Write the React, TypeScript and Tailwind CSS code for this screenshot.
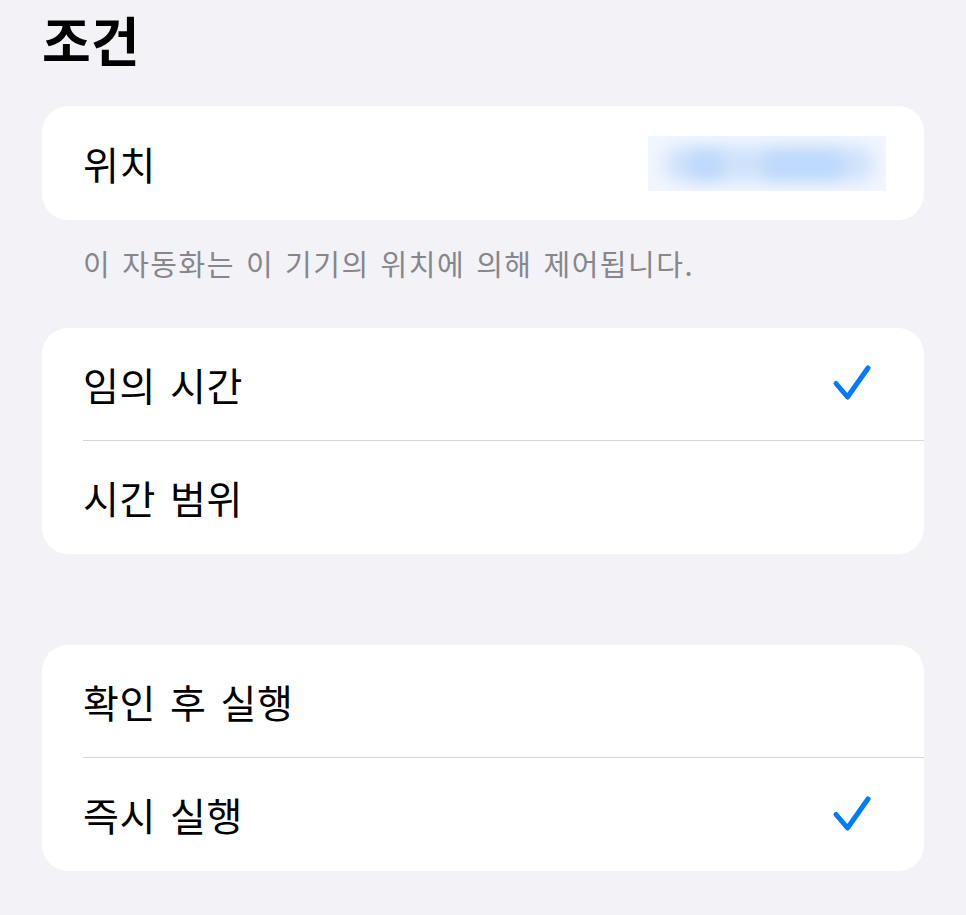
import React from 'react'

const font = { fontFamily: '"Noto Sans CJK KR", "Noto Sans", sans-serif' }

function Check() {
  return (
    <svg width="42" height="40" viewBox="0 0 42 40" fill="none">
      <path d="M4 19.5 L15.5 33 L36 4" stroke="#007aff" strokeWidth="5" strokeLinecap="round" strokeLinejoin="round" />
    </svg>
  )
}

function Row({ label, checked, last }: { label: string; checked?: boolean; last?: boolean }) {
  return (
    <div className="pl-[41px]">
      <div className={`flex h-[113px] items-center justify-between pr-[50px] ${last ? '' : 'border-b border-[#d6d6d8]'}`}>
        <span className="text-[39px] tracking-[0.5px] [word-spacing:5px] text-black">{label}</span>
        {checked && <Check />}
      </div>
    </div>
  )
}

export default function App() {
  return (
    <div className="min-h-[915px] w-full bg-[#f2f2f7] px-[42px]" style={font}>
      <h1 className="pt-[4px] text-[53px] font-bold leading-[70px] text-black">조건</h1>

      <div className="mt-[32px] flex h-[114px] items-center justify-between rounded-[26px] bg-white pl-[41px] pr-[38px]">
        <span className="text-[39px] tracking-[0.5px] text-black">위치</span>
        <div className="relative h-[55px] w-[238px] overflow-hidden bg-[#f1f6fe]">
          <div className="absolute left-[16px] top-[10px] h-[36px] w-[210px] rounded-[18px] bg-[#cfe2fb] blur-[8px]" />
          <div className="absolute left-[40px] top-[16px] h-[26px] w-[36px] rounded-full bg-[#bcd8fb] blur-[7px]" />
          <div className="absolute left-[115px] top-[16px] h-[26px] w-[80px] rounded-full bg-[#bcd8fb] blur-[7px]" />
        </div>
      </div>

      <p className="mt-[23px] pl-[41px] text-[29px] leading-[40px] tracking-[1.5px] [word-spacing:3px] text-[#86868b]">이 자동화는 이 기기의 위치에 의해 제어됩니다.</p>

      <div className="mt-[45px] overflow-hidden rounded-[26px] bg-white">
        <Row label="임의 시간" checked />
        <Row label="시간 범위" last />
      </div>

      <div className="mt-[91px] overflow-hidden rounded-[26px] bg-white">
        <Row label="확인 후 실행" />
        <Row label="즉시 실행" checked last />
      </div>
    </div>
  )
}
